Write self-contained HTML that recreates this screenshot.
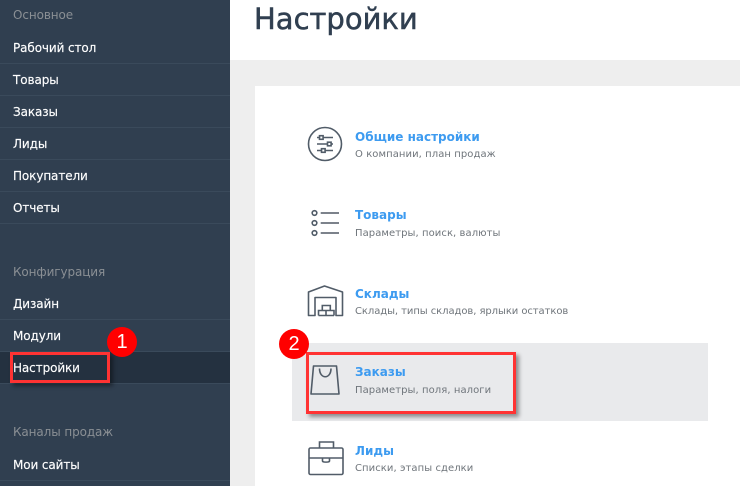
<!DOCTYPE html>
<html lang="ru"><head><meta charset="utf-8"><style>
html,body{margin:0;padding:0;width:740px;height:486px;overflow:hidden;background:#fff}
body{position:relative;font-family:"DejaVu Sans","Liberation Sans",sans-serif}
div{position:absolute;white-space:nowrap}
.side{left:0;top:0;width:230px;height:486px;background:#303f50}
.ln{left:0;width:230px;height:1px;background:#3a4a5b}
.h{left:13px;font-size:12px;line-height:16px;color:#8a8f94;letter-spacing:-.1px}
.i{left:13px;font-size:12px;line-height:16px;color:#fff;letter-spacing:-.1px;-webkit-text-stroke:.15px #fff}
.t{left:355px;font-size:12px;line-height:16px;font-weight:bold;color:#3d9bf0;letter-spacing:0}
.s{left:355px;font-size:10px;line-height:14px;color:#6f757b;letter-spacing:.07px}
svg{position:absolute;overflow:visible}
svg *{fill:none;stroke:#515c68;stroke-width:1.6}
.c{width:30px;height:30px;border-radius:50%;background:#f00;color:#fff;font-family:"Liberation Sans",sans-serif;font-size:20px;line-height:30px;text-align:center}
.r{border:3px solid #ff3333;box-shadow:3px 3px 4px rgba(0,0,0,.4);box-sizing:border-box}
</style></head><body>
<div style="left:230px;top:60px;width:510px;height:426px;background:#eee"></div>
<div style="left:255px;top:86px;width:485px;height:400px;background:#fff"></div>
<div style="left:254px;top:-1px;font-size:29px;line-height:40px;color:#303f50;-webkit-text-stroke:.5px #303f50">Настройки</div>

<div class="side"></div>
<div class="ln" style="top:63px"></div><div class="ln" style="top:95px"></div><div class="ln" style="top:127px"></div><div class="ln" style="top:159px"></div><div class="ln" style="top:191px"></div><div class="ln" style="top:223px"></div>
<div class="ln" style="top:319px"></div><div class="ln" style="top:351px"></div>
<div style="left:0;top:352px;width:230px;height:31px;background:#243140"></div>
<div class="ln" style="top:383px"></div><div class="ln" style="top:480px"></div>
<div class="h" style="top:7px">Основное</div>
<div class="i" style="top:40px">Рабочий стол</div>
<div class="i" style="top:72px">Товары</div>
<div class="i" style="top:104px">Заказы</div>
<div class="i" style="top:136px">Лиды</div>
<div class="i" style="top:168px">Покупатели</div>
<div class="i" style="top:200px">Отчеты</div>
<div class="h" style="top:264px">Конфигурация</div>
<div class="i" style="top:296px">Дизайн</div>
<div class="i" style="top:328px">Модули</div>
<div class="i" style="top:360px">Настройки</div>
<div class="h" style="top:424px">Каналы продаж</div>
<div class="i" style="top:457px">Мои сайты</div>

<div style="left:292px;top:343px;width:416px;height:78px;background:#e9eaec"></div>

<svg style="left:0;top:0" width="740" height="486" viewBox="0 0 740 486">
<circle cx="325" cy="144" r="16.5"/>
<path d="M317 137.500h16M317 144h16M317 150.500h16" stroke-width="1.300"/>
<rect x="319.500" y="135.700" width="3.600" height="3.600" style="fill:#fff"/><rect x="327.500" y="142.200" width="3.600" height="3.600" style="fill:#fff"/><rect x="321.500" y="148.700" width="3.600" height="3.600" style="fill:#fff"/>
<circle cx="314.500" cy="213" r="2.300"/><circle cx="314.500" cy="223" r="2.300"/><circle cx="314.500" cy="233" r="2.300"/>
<path d="M320.700 213h18.300M320.700 223h18.300M320.700 233h18.300" style="stroke:#69717b;stroke-width:1.800"/>
<path d="M308.500 315.500v-23.500l16-6 18 6v23.500h-6.500v-18h-21v18z" stroke-linejoin="round"/>
<path d="M318.500 315.500h15.500M318.500 315.500v-5h15.500v5M322.300 310.500v-5h8v5M326 310.500v5" stroke-width="1.300"/>
<path d="M313.500 366h23l2.500 28h-28zM319.500 368.500c0 11 11.500 11 11.500 0" stroke-linejoin="round"/>
<path d="M310.500 448h31a1.500 1.500 0 0 1 1.500 1.500v23.500a1.500 1.500 0 0 1-1.500 1.500h-31a1.500 1.500 0 0 1-1.500-1.500v-23.500a1.500 1.500 0 0 1 1.500-1.500zM309 458h34M319.500 448v-6h14v6M322.500 458v3c0 1.500 7 1.500 7 0v-3"/>
</svg>

<div class="t" style="top:129px">Общие настройки</div>
<div class="s" style="top:148px">О компании, план продаж</div>
<div class="t" style="top:207px">Товары</div>
<div class="s" style="top:227px">Параметры, поиск, валюты</div>
<div class="t" style="top:286px">Склады</div>
<div class="s" style="top:305px;letter-spacing:-.07px">Склады, типы складов, ярлыки остатков</div>
<div class="t" style="top:364px">Заказы</div>
<div class="s" style="top:384px">Параметры, поля, налоги</div>
<div class="t" style="top:443px">Лиды</div>
<div class="s" style="top:462px">Списки, этапы сделки</div>

<div class="r" style="left:10px;top:352px;width:100px;height:31px"></div>
<div class="r" style="left:306px;top:352px;width:210px;height:62px"></div>
<div class="c" style="left:107px;top:327px">1</div>
<div class="c" style="left:279px;top:329px">2</div>
</body></html>
